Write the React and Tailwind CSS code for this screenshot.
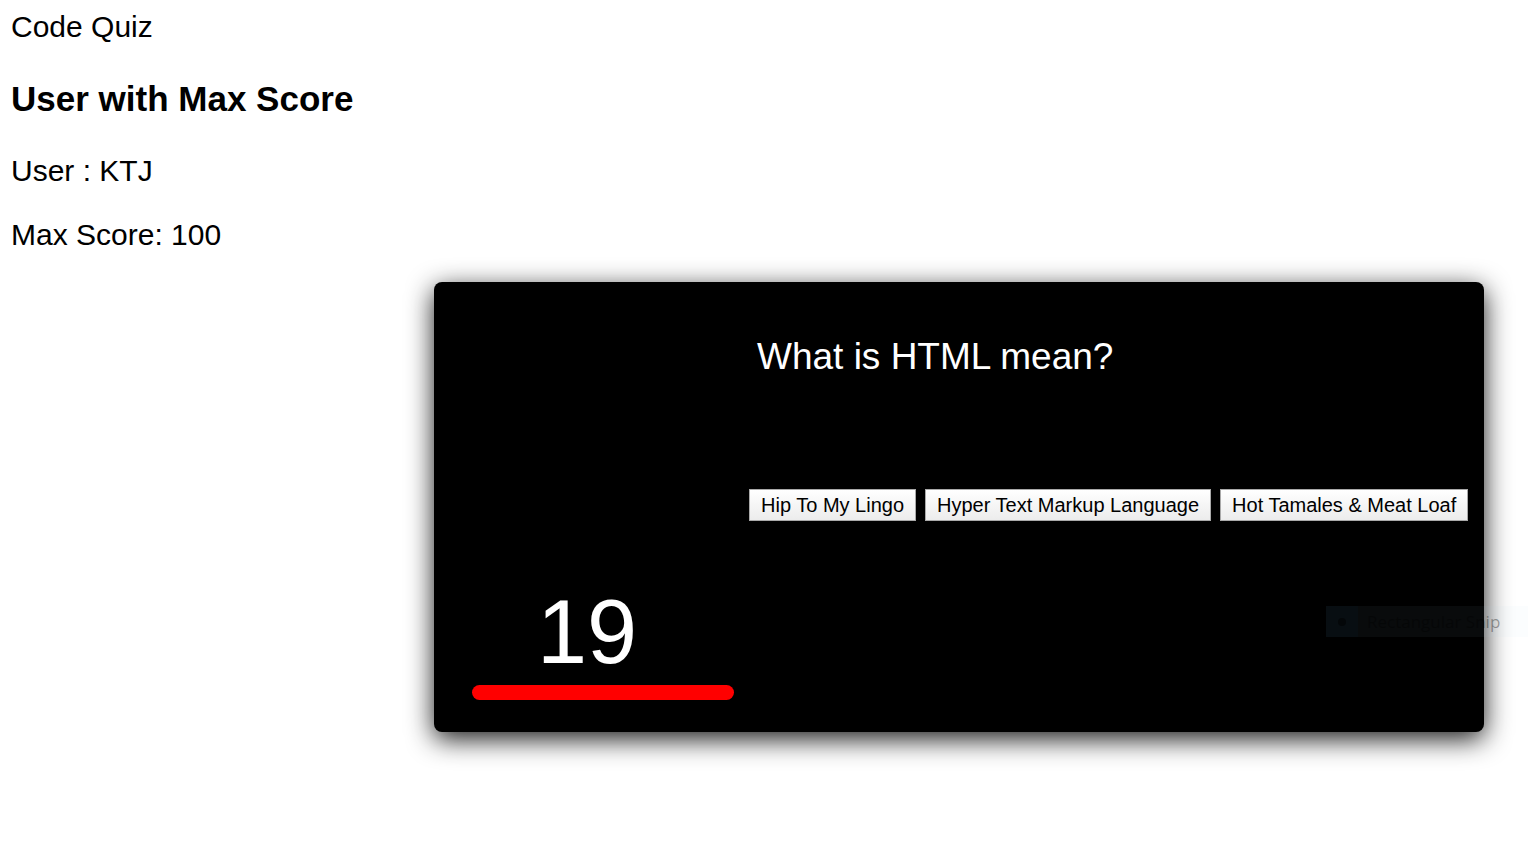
const answers = ["Hip To My Lingo", "Hyper Text Markup Language", "Hot Tamales & Meat Loaf"];

function ScoreBoard() {
  return (
    <header className="px-[11px] pt-[9px] text-[30px] leading-9 text-black">
      <p>Code Quiz</p>
      <h3 className="mt-[34px] text-[35px] leading-10 font-bold">User with Max Score</h3>
      <p className="mt-[34px]">User : KTJ</p>
      <p className="mt-7">Max Score: 100</p>
    </header>
  );
}

function Timer({ seconds }) {
  return (
    <div className="flex w-[262px] shrink-0 flex-col justify-end pb-8">
      <div role="timer" className="pr-8 text-center text-[90px] leading-[106px] text-white">
        {seconds}
      </div>
      <div className="h-[15px] rounded-full bg-[#ff0000]" />
    </div>
  );
}

function Question() {
  return (
    <div className="flex min-w-0 flex-1 flex-col pt-[53px] pb-[211px]">
      <h2 className="px-2 text-[37px] leading-[44px] text-white">What is HTML mean?</h2>
      <div className="mt-[110px] flex gap-[9px]">
        {answers.map((answer) => (
          <button
            key={answer}
            type="button"
            className="h-8 border border-[#a9a9a9] bg-linear-to-b from-white to-[#ececec] px-[11px] text-[20px] leading-[30px] whitespace-nowrap text-black"
          >
            {answer}
          </button>
        ))}
      </div>
    </div>
  );
}

function SnipMenu() {
  return (
    <div className="pointer-events-none absolute top-[606px] right-0 flex h-[31px] w-[202px] items-center bg-[#b4d2f0]/5 font-['Open_Sans',sans-serif] text-[17px] text-black/35">
      <span className="flex h-full w-8 items-center justify-center bg-[#0078d7]/3">
        <span className="size-2 rounded-full bg-black/50" />
      </span>
      <span className="pl-[9px] whitespace-nowrap">Rectangular Snip</span>
    </div>
  );
}

export default function App() {
  return (
    <div className="relative min-h-screen overflow-x-hidden bg-white font-['Liberation_Sans',Arial,sans-serif]">
      <ScoreBoard />
      <main className="mt-[29px] flex justify-end pr-11 pb-16">
        <section className="flex w-full max-w-[1050px] gap-[15px] rounded-lg bg-black pr-4 pl-[38px] shadow-[0_7px_27px_rgba(0,0,0,0.9)]">
          <Timer seconds={19} />
          <Question />
        </section>
      </main>
      <SnipMenu />
    </div>
  );
}
